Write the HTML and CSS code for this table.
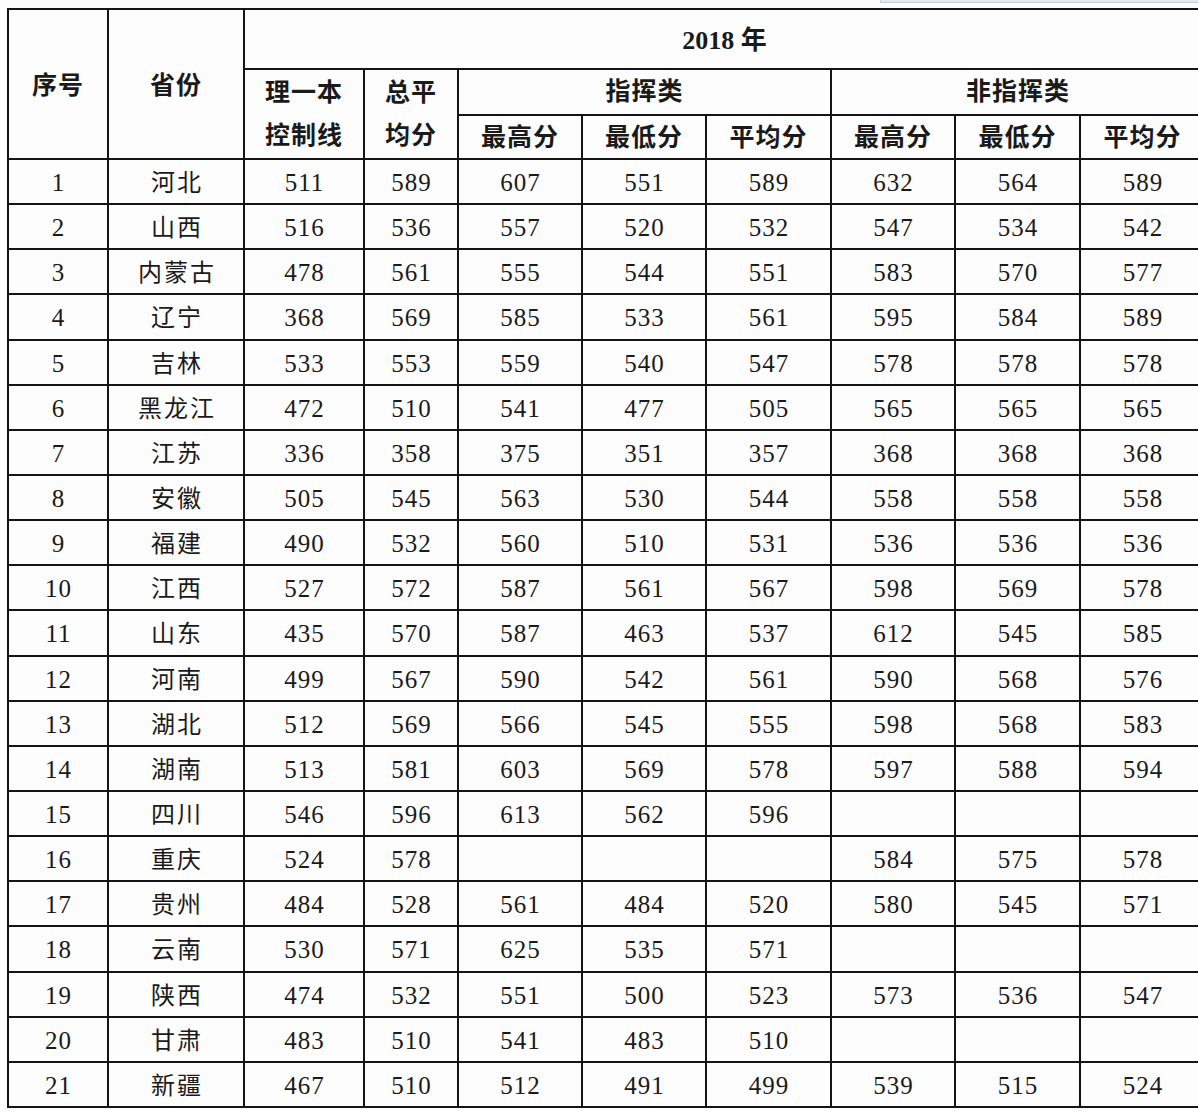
FILE: index.html
```html
<!DOCTYPE html>
<html lang="zh">
<head>
<meta charset="utf-8">
<link rel="stylesheet" href="styles.css">
</head>
<body>
<div class="topstrip"></div>
<div class="wrap">
<table class="scores">
<colgroup>
<col class="c1"><col class="c2"><col class="c3"><col class="c4"><col class="c5"><col class="c6"><col class="c7"><col class="c8"><col class="c9"><col class="c10">
</colgroup>
<thead>
<tr class="h1">
<th rowspan="3" class="hd">序号</th>
<th rowspan="3" class="hd">省份</th>
<th colspan="8" class="year">2018 年</th>
</tr>
<tr class="h2">
<th rowspan="2" class="two">理一本<br>控制线</th>
<th rowspan="2" class="two">总平<br>均分</th>
<th colspan="3">指挥类</th>
<th colspan="3">非指挥类</th>
</tr>
<tr class="h3">
<th>最高分</th><th>最低分</th><th>平均分</th>
<th>最高分</th><th>最低分</th><th>平均分</th>
</tr>
</thead>
<tbody>
<tr><td>1</td><td class="pv">河北</td><td>511</td><td>589</td><td>607</td><td>551</td><td>589</td><td>632</td><td>564</td><td>589</td></tr>
<tr><td>2</td><td class="pv">山西</td><td>516</td><td>536</td><td>557</td><td>520</td><td>532</td><td>547</td><td>534</td><td>542</td></tr>
<tr><td>3</td><td class="pv">内蒙古</td><td>478</td><td>561</td><td>555</td><td>544</td><td>551</td><td>583</td><td>570</td><td>577</td></tr>
<tr><td>4</td><td class="pv">辽宁</td><td>368</td><td>569</td><td>585</td><td>533</td><td>561</td><td>595</td><td>584</td><td>589</td></tr>
<tr><td>5</td><td class="pv">吉林</td><td>533</td><td>553</td><td>559</td><td>540</td><td>547</td><td>578</td><td>578</td><td>578</td></tr>
<tr><td>6</td><td class="pv">黑龙江</td><td>472</td><td>510</td><td>541</td><td>477</td><td>505</td><td>565</td><td>565</td><td>565</td></tr>
<tr><td>7</td><td class="pv">江苏</td><td>336</td><td>358</td><td>375</td><td>351</td><td>357</td><td>368</td><td>368</td><td>368</td></tr>
<tr><td>8</td><td class="pv">安徽</td><td>505</td><td>545</td><td>563</td><td>530</td><td>544</td><td>558</td><td>558</td><td>558</td></tr>
<tr><td>9</td><td class="pv">福建</td><td>490</td><td>532</td><td>560</td><td>510</td><td>531</td><td>536</td><td>536</td><td>536</td></tr>
<tr><td>10</td><td class="pv">江西</td><td>527</td><td>572</td><td>587</td><td>561</td><td>567</td><td>598</td><td>569</td><td>578</td></tr>
<tr><td>11</td><td class="pv">山东</td><td>435</td><td>570</td><td>587</td><td>463</td><td>537</td><td>612</td><td>545</td><td>585</td></tr>
<tr><td>12</td><td class="pv">河南</td><td>499</td><td>567</td><td>590</td><td>542</td><td>561</td><td>590</td><td>568</td><td>576</td></tr>
<tr><td>13</td><td class="pv">湖北</td><td>512</td><td>569</td><td>566</td><td>545</td><td>555</td><td>598</td><td>568</td><td>583</td></tr>
<tr><td>14</td><td class="pv">湖南</td><td>513</td><td>581</td><td>603</td><td>569</td><td>578</td><td>597</td><td>588</td><td>594</td></tr>
<tr><td>15</td><td class="pv">四川</td><td>546</td><td>596</td><td>613</td><td>562</td><td>596</td><td></td><td></td><td></td></tr>
<tr><td>16</td><td class="pv">重庆</td><td>524</td><td>578</td><td></td><td></td><td></td><td>584</td><td>575</td><td>578</td></tr>
<tr><td>17</td><td class="pv">贵州</td><td>484</td><td>528</td><td>561</td><td>484</td><td>520</td><td>580</td><td>545</td><td>571</td></tr>
<tr><td>18</td><td class="pv">云南</td><td>530</td><td>571</td><td>625</td><td>535</td><td>571</td><td></td><td></td><td></td></tr>
<tr><td>19</td><td class="pv">陕西</td><td>474</td><td>532</td><td>551</td><td>500</td><td>523</td><td>573</td><td>536</td><td>547</td></tr>
<tr><td>20</td><td class="pv">甘肃</td><td>483</td><td>510</td><td>541</td><td>483</td><td>510</td><td></td><td></td><td></td></tr>
<tr><td>21</td><td class="pv">新疆</td><td>467</td><td>510</td><td>512</td><td>491</td><td>499</td><td>539</td><td>515</td><td>524</td></tr>
</tbody>
</table>
</div>
</body>
</html>
```
FILE: styles.css
```css
html, body {
  margin: 0;
  padding: 0;
  background: #fdfdfd;
  overflow: hidden;
}
body {
  width: 1198px;
  height: 1112px;
  position: relative;
  font-family: "Liberation Serif", "Noto Sans CJK SC", serif;
  color: #1a1a1a;
}
.topstrip {
  position: absolute;
  left: 880px;
  top: -2px;
  width: 330px;
  height: 3px;
  background: #e6e8ea;
  border: 1px solid #c9cdd1;
}
.wrap {
  padding: 8px 0 0 7px;
  width: 1191px;
  overflow: hidden;
}
.scores {
  border-collapse: collapse;
  table-layout: fixed;
  width: 1197px;
}
.c1 { width: 100px; }
.c2 { width: 136px; }
.c3 { width: 120px; }
.c4 { width: 94px; }
.c5 { width: 124px; }
.c6 { width: 124px; }
.c7 { width: 125px; }
.c8 { width: 124px; }
.c9 { width: 125px; }
.c10 { width: 125px; }
.scores th, .scores td {
  border: 2px solid #141414;
  padding: 0;
  text-align: center;
  vertical-align: middle;
  white-space: nowrap;
}
.scores th {
  font-weight: bold;
  font-size: 25px;
  letter-spacing: 1px;
  line-height: 40px;
}
.scores th.hd {
  padding-top: 4px;
}
.scores th.two {
  line-height: 43px;
}
.scores th.year {
  font-size: 26px;
  letter-spacing: 0;
  padding-top: 4px;
}
.h1 { height: 60px; }
.h2 { height: 46px; }
.h3 { height: 44px; }
.h3 th { padding-top: 2px; }
.scores tbody tr { height: 45.15px; }
.scores td {
  font-size: 25px;
  line-height: 30px;
  padding-top: 3px;
  letter-spacing: 1px;
  padding-left: 1px;
}
.scores td.pv {
  font-size: 24px;
  letter-spacing: 2px;
  padding-left: 2px;
}
```
